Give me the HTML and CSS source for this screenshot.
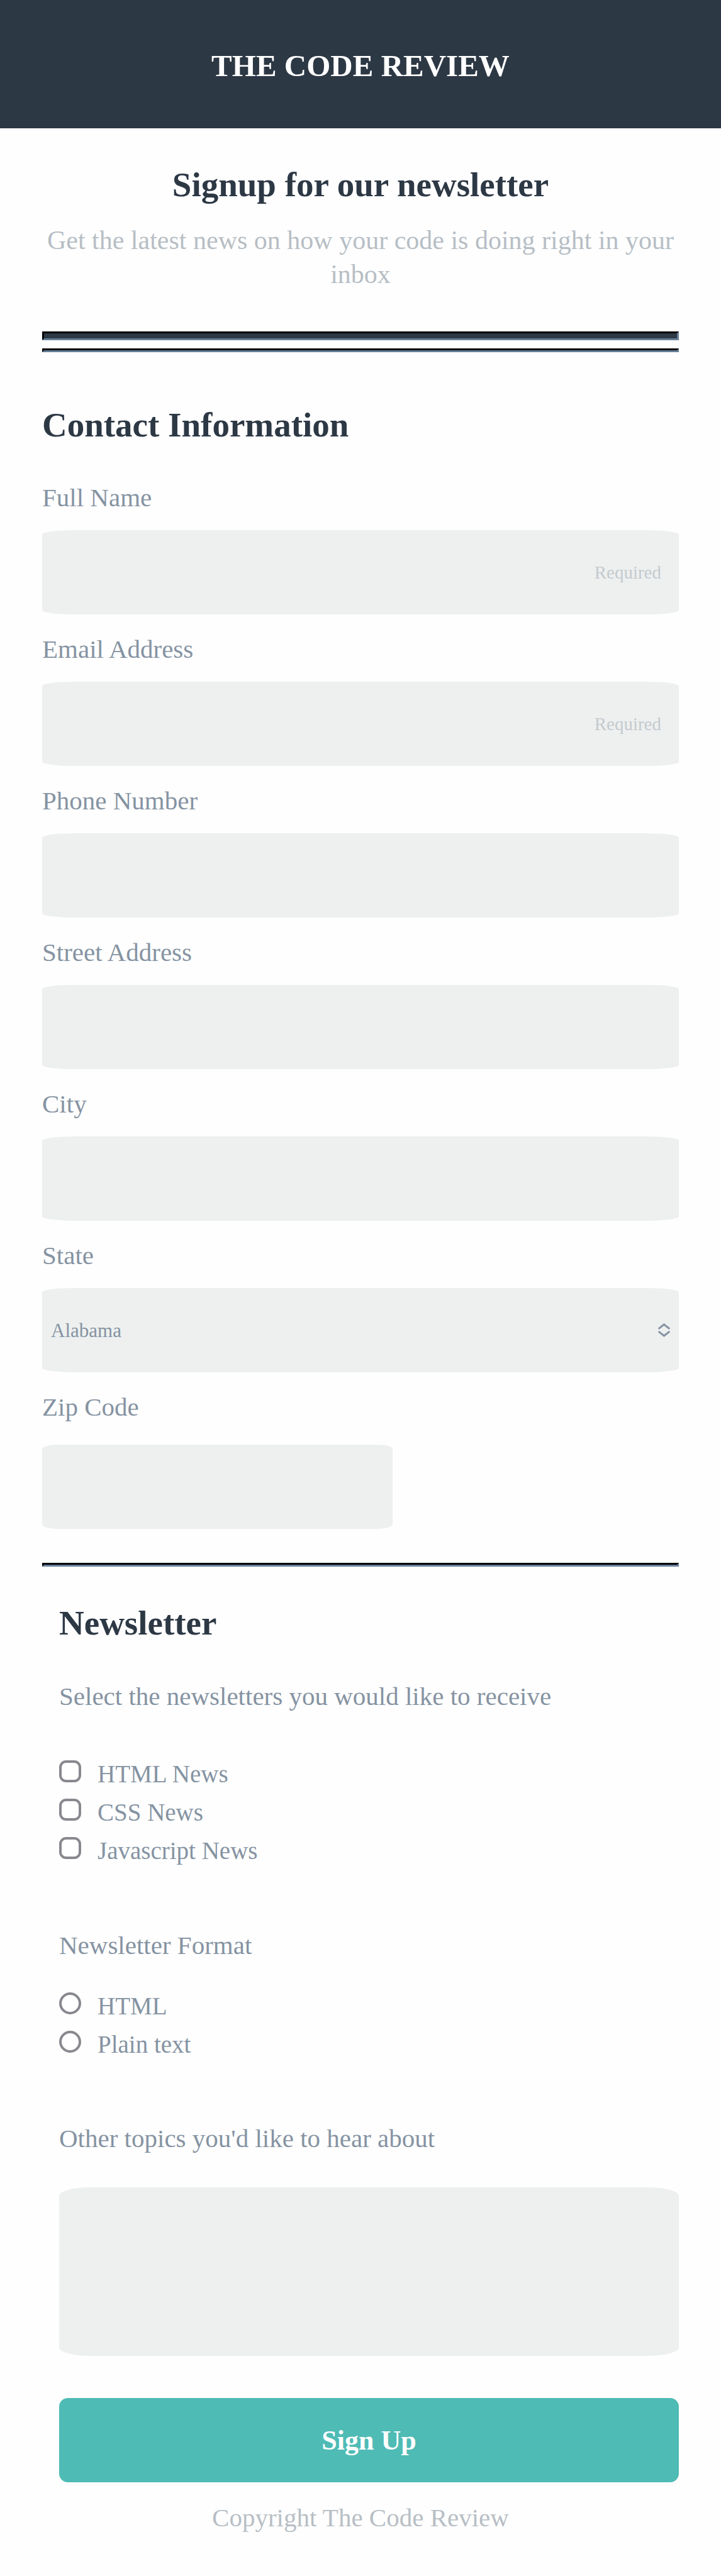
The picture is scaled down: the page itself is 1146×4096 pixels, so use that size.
FILE: index.html
```html
<!DOCTYPE html>
<html lang="en">
<head>
  <meta charset="utf-8">
  <meta name="viewport" content="width=device-width, initial-scale=1">
  <title>The Code Review</title>
  <link rel="stylesheet" href="styles.css">
</head>
<body>
  <header class="site-header">
    <h1 class="site-title">THE CODE REVIEW</h1>
  </header>
  <main class="page">
    <section class="intro">
      <h2 class="heading">Signup for our newsletter</h2>
      <p class="lead">Get the latest news on how your code is doing right in your inbox</p>
    </section>
    <hr class="rule rule-thick">
    <form>
      <hr class="rule rule-double">
      <section class="contact">
        <h2 class="heading">Contact Information</h2>
        <div class="fields">
          <div class="field">
            <label class="label" for="name">Full Name</label>
            <input class="control" type="text" id="name" name="name" placeholder="Required" required>
          </div>
          <div class="field">
            <label class="label" for="email">Email Address</label>
            <input class="control" type="email" id="email" name="email" placeholder="Required" required>
          </div>
          <div class="field">
            <label class="label" for="phone">Phone Number</label>
            <input class="control" type="tel" id="phone" name="phone">
          </div>
          <div class="field">
            <label class="label" for="street">Street Address</label>
            <input class="control" type="text" id="street" name="street">
          </div>
          <div class="field">
            <label class="label" for="city">City</label>
            <input class="control" type="text" id="city" name="city">
          </div>
          <div class="field">
            <label class="label" for="state">State</label>
            <div class="select-wrap">
              <select class="control select" id="state" name="state">
                <option>Alabama</option>
              </select>
              <svg class="chevrons" viewBox="0 0 19 22" aria-hidden="true">
                <path d="M1.700 8.200L9.500 2L17.300 8.200M1.700 13.800L9.500 20L17.300 13.800"/>
              </svg>
            </div>
          </div>
          <div class="field field-zip">
            <label class="label" for="zip">Zip Code</label>
            <input class="control control-zip" type="text" id="zip" name="zip">
          </div>
        </div>
      </section>
      <hr class="rule rule-section">
      <section class="newsletter">
        <h2 class="heading">Newsletter</h2>
        <fieldset class="group group-topics">
          <legend class="label">Select the newsletters you would like to receive</legend>
          <div class="options">
            <label class="option"><input class="tick" type="checkbox" name="news" value="html">HTML News</label>
            <label class="option"><input class="tick" type="checkbox" name="news" value="css">CSS News</label>
            <label class="option"><input class="tick" type="checkbox" name="news" value="js">Javascript News</label>
          </div>
        </fieldset>
        <fieldset class="group group-format">
          <legend class="label">Newsletter Format</legend>
          <div class="options">
            <label class="option"><input class="tick tick-round" type="radio" name="format" value="html">HTML</label>
            <label class="option"><input class="tick tick-round" type="radio" name="format" value="text">Plain text</label>
          </div>
        </fieldset>
        <div class="other">
          <label class="label" for="topics">Other topics you'd like to hear about</label>
          <textarea class="control textarea" id="topics" name="topics"></textarea>
        </div>
        <button class="submit" type="submit">Sign Up</button>
      </section>
    </form>
  </main>
  <footer class="site-footer">Copyright The Code Review</footer>
</body>
</html>
```
FILE: styles.css
```css
* {
  box-sizing: border-box;
}

body {
  margin: 0;
  background: #fefefe;
  color: #8593a2;
  font-family: "Liberation Serif", serif;
  font-size: 41px;
  line-height: 48px;
}

.site-header {
  padding: 75px 67px 69px;
  background: #2d3845;
  color: #fff;
  text-align: center;
}

.site-title {
  margin: 0;
  font-size: 49px;
  line-height: 60px;
}

.page {
  padding: 60px 67px 0;
}

.heading {
  margin: 0;
  color: #2d3845;
  font-size: 55px;
  line-height: 60px;
}

.intro {
  text-align: center;
}

.lead {
  margin: 31px 0 0;
  color: #b7bec5;
  font-size: 42px;
  line-height: 54px;
}

.rule {
  height: 6px;
  margin: 0;
  border: 3px solid;
  border-color: #000 #667f99 #667f99 #000;
  background: #2d3845;
}

.rule-thick {
  height: 14px;
  margin-top: 64px;
}

.rule-double {
  margin-top: 13px;
}

.rule-section {
  margin-top: 54px;
}

.contact {
  padding-top: 86px;
}

.fields {
  display: flex;
  flex-direction: column;
  gap: 31px;
  margin-top: 61px;
}

.field {
  display: flex;
  flex-direction: column;
  gap: 28px;
}

.field-zip {
  gap: 36px;
}

.control {
  display: block;
  width: 100%;
  height: 134px;
  margin: 0;
  padding: 0 28px;
  border: 0;
  border-radius: 5%;
  background: #edf0ef;
  color: #8593a2;
  font-family: inherit;
  font-size: 29px;
}

.control::placeholder {
  color: #c5cacf;
  opacity: 1;
  text-align: right;
}

.control-zip {
  width: 55%;
}

.select-wrap {
  display: grid;
  align-items: center;
}

.select {
  grid-area: 1 / 1;
  padding: 0 14px;
  appearance: none;
  font-size: 31px;
}

.chevrons {
  grid-area: 1 / 1;
  justify-self: end;
  width: 19px;
  height: 22px;
  margin-right: 14px;
  fill: none;
  stroke: #8593a2;
  stroke-width: 3;
  stroke-linecap: round;
  pointer-events: none;
}

.newsletter {
  padding: 60px 0 0 27px;
}

.group {
  min-width: 0;
  margin: 62px 0 0;
  padding: 0;
  border: 0;
}

.group legend {
  padding: 0;
}

.options {
  display: flex;
  flex-direction: column;
  margin-top: 69px;
}

.group-format {
  margin-top: 96px;
}

.group-format .options {
  margin-top: 42px;
}

.option {
  display: flex;
  gap: 26px;
  font-size: 39px;
  line-height: 61px;
}

.tick {
  flex: none;
  width: 35px;
  height: 35px;
  margin: 9px 0 0;
  appearance: none;
  border: 4px solid #88898f;
  border-radius: 11px;
  background: #fff;
}

.tick-round {
  border-radius: 50%;
}

.other {
  display: flex;
  flex-direction: column;
  gap: 54px;
  margin-top: 95px;
}

.textarea {
  height: 268px;
  padding: 28px;
  resize: none;
}

.submit {
  display: block;
  width: 100%;
  height: 134px;
  margin: 67px 0 0;
  padding: 0;
  border: 0;
  border-radius: 14px;
  background: #4fbbb5;
  color: #fff;
  font-family: inherit;
  font-size: 44px;
  font-weight: bold;
}

.site-footer {
  padding: 32px 67px 69px;
  color: #b7bec5;
  text-align: center;
}
```
